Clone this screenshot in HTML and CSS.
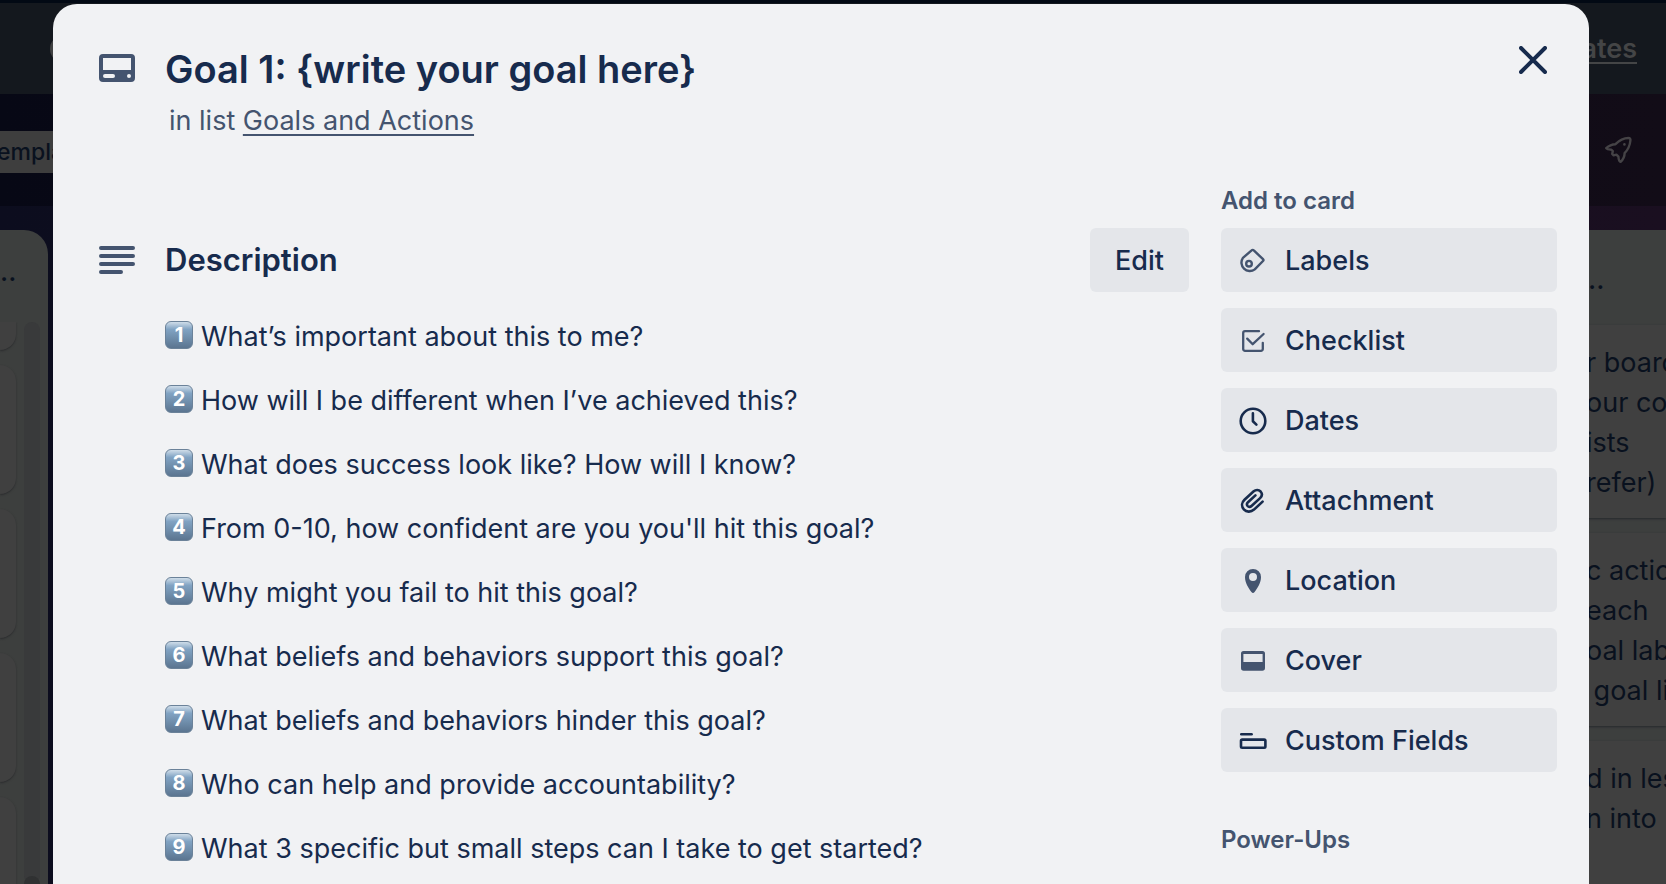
FILE: index.html
```
<!DOCTYPE html>
<html lang="en">
<head>
    <meta charset="UTF-8">
    <meta name="viewport" content="width=device-width, initial-scale=1.0">
    <title>Goal 1: {write your goal here}</title>
    <link rel="stylesheet" href="styles.css">
</head>
<body>
    <!-- Board behind the dialog -->
    <div class="board">
        <div class="top-nav">
            <span class="nav-dot"></span>
            <a class="nav-link" href="#">ates</a>
        </div>
        <div class="board-header">
            <span class="board-tag">empla</span>
            <svg class="rocket" viewBox="0 0 32 32" width="32" height="32" fill="none" stroke="currentColor" stroke-width="2.4" stroke-linejoin="round"><path d="M4.2 14.2C7 11.6 10 10.3 13.5 10.2C17.5 6 22 4 26.5 4C28 4 28.6 5 28.4 6.5C28 11 26.2 15.5 22.6 19.2C22.6 22.5 21.2 25.5 18.6 27.8C17.2 27.6 16.6 25.5 16.4 22.6L14.4 20.6L11.6 21.4L10.2 20L10.8 17.2L9.4 15.8C7 15.6 5 15.4 4.2 14.2Z"/><circle cx="22.4" cy="10.4" r="1.3" fill="currentColor" stroke="none"/></svg>
        </div>
        <div class="lists">
            <div class="list list-left">
                <div class="list-title">..</div>
                <div class="list-body">
                    <div class="cards">
                        <div class="card card-cut"></div>
                        <div class="card"></div>
                        <div class="card"></div>
                        <div class="card"></div>
                        <div class="card"></div>
                    </div>
                    <div class="scrollbar"><span class="scroll-thumb"></span></div>
                </div>
            </div>
            <div class="list list-right">
                <div class="list-title">..</div>
                <div class="text-card">r board<br>our com<br>ists<br>refer)</div>
                <div class="text-card">c actio<br>each<br>oal lab<br>&nbsp;goal li</div>
                <div class="text-card">d in les<br>n into<br><br><br></div>
            </div>
        </div>
    </div>

    <!-- Card dialog -->
    <div class="overlay">
        <div class="dialog" role="dialog" aria-labelledby="card-title">
            <div class="dialog-header">
                <svg class="section-icon" viewBox="0 0 36 28" width="36" height="28"><path fill="currentColor" fill-rule="evenodd" d="M4 0H32A4 4 0 0 1 36 4V24A4 4 0 0 1 32 28H4A4 4 0 0 1 0 24V4A4 4 0 0 1 4 0ZM4 4V16H32V4ZM6 20A2 2 0 0 0 6 24H14A2 2 0 0 0 14 20ZM30 20A2 2 0 0 0 30 24A2 2 0 0 0 30 20Z"/></svg>
                <div class="heading">
                    <h1 id="card-title">Goal 1: {write your goal here}</h1>
                    <p class="in-list">in list <a href="#">Goals and Actions</a></p>
                </div>
                <button class="close" type="button" aria-label="Close"><svg viewBox="0 0 28 28" width="28" height="28" fill="none" stroke="currentColor" stroke-width="4" stroke-linecap="round"><path d="M2 2L26 26M26 2L2 26"/></svg></button>
            </div>

            <div class="dialog-body">
                <div class="main">
                    <div class="section-title">
                        <svg class="section-icon" viewBox="0 0 36 28" width="36" height="28" stroke="currentColor" stroke-width="4" stroke-linecap="round"><path d="M2 2H34M2 10H34M2 18H34M2 26H22"/></svg>
                        <h2>Description</h2>
                        <button class="edit" type="button">Edit</button>
                    </div>
                    <div class="description">
                        <p><span class="keycap">1</span>What’s important about this to me?</p>
                        <p><span class="keycap">2</span>How will I be different when I’ve achieved this?</p>
                        <p><span class="keycap">3</span>What does success look like? How will I know?</p>
                        <p><span class="keycap">4</span>From 0-10, how confident are you you'll hit this goal?</p>
                        <p><span class="keycap">5</span>Why might you fail to hit this goal?</p>
                        <p><span class="keycap">6</span>What beliefs and behaviors support this goal?</p>
                        <p><span class="keycap">7</span>What beliefs and behaviors hinder this goal?</p>
                        <p><span class="keycap">8</span>Who can help and provide accountability?</p>
                        <p><span class="keycap">9</span>What 3 specific but small steps can I take to get started?</p>
                    </div>
                </div>

                <div class="sidebar">
                    <h3>Add to card</h3>
                    <div class="actions">
                        <button type="button"><svg class="soft" viewBox="0 0 32 32" fill="none" stroke="currentColor" stroke-width="2.4" stroke-linejoin="round"><path d="M14.6 5.4Q15.7 4.3 16.8 5.4L26 14.2Q26.9 15.1 26 16L17.8 24.4A8.4 8.4 0 0 1 5.9 12.9Z"/><circle cx="12" cy="18.7" r="2.8"/></svg>Labels</button>
                        <button type="button"><svg class="soft" viewBox="0 0 32 32" fill="none" stroke="currentColor" stroke-width="2.3" stroke-linecap="round" stroke-linejoin="round"><path d="M22 6.2H8A1.8 1.8 0 0 0 6.2 8V24A1.8 1.8 0 0 0 8 25.8H24A1.8 1.8 0 0 0 25.8 24V17.8M10.2 13.6L15.7 19.2L26.6 9"/></svg>Checklist</button>
                        <button type="button"><svg viewBox="0 0 32 32" fill="none" stroke="currentColor" stroke-width="2.6" stroke-linecap="round" stroke-linejoin="round"><circle cx="16" cy="16" r="12.3"/><path d="M15.9 8.3V16.2L19.4 19.6"/></svg>Dates</button>
                        <button type="button"><svg viewBox="0 0 32 32" fill="none" stroke="currentColor" stroke-width="2.6" stroke-linecap="round" stroke-linejoin="round"><path d="M25.6 16.6L17 24.6C13.8 27.4 9.4 27.2 6.8 24.3C4.3 21.4 4.6 17.4 7.5 14.7L16.7 6.3C18.8 4.5 21.8 4.6 23.6 6.5C25.3 8.5 25.1 11.2 23.1 13.1L14.5 21C13.3 22.1 11.6 22.1 10.6 21C9.6 19.8 9.8 18.4 11 17.2L18.4 10.4"/></svg>Attachment</button>
                        <button type="button"><svg class="soft" viewBox="0 0 32 32"><path fill="currentColor" fill-rule="evenodd" d="M16 4A8 8 0 0 1 24 12C24 18 20.5 23 17.6 27Q16 29 14.4 27C11.5 23 8 18 8 12A8 8 0 0 1 16 4ZM16 8A4 4 0 0 0 16 16A4 4 0 0 0 16 8Z"/></svg>Location</button>
                        <button type="button"><svg class="soft" viewBox="0 0 32 32"><path fill="currentColor" fill-rule="evenodd" d="M6.5 6H25.5A2.5 2.5 0 0 1 28 8.5V23A2.7 2.7 0 0 1 25.3 25.7H6.7A2.7 2.7 0 0 1 4 23V8.5A2.5 2.5 0 0 1 6.5 6ZM6.4 9V17H25.6V9Z"/></svg>Cover</button>
                        <button type="button"><svg viewBox="0 0 32 32" fill="none" stroke="currentColor" stroke-width="2.6" stroke-linecap="round"><path d="M4.3 9.3H14.6"/><rect x="4" y="14.6" width="24.4" height="8.2" rx="1.2"/></svg>Custom Fields</button>
                    </div>
                    <h3>Power-Ups</h3>
                </div>
            </div>
        </div>
    </div>
</body>
</html>
```

FILE: styles.css
```
* { box-sizing: border-box; }
body { margin: 0; height: 100vh; overflow: hidden; position: relative; font-family: Inter, "Liberation Sans", sans-serif; font-size: 27px; line-height: 40px; color: #172b4d; }
h1, h2, h3, p { margin: 0; }
button { font: inherit; font-weight: 500; color: #172b4d; border: none; cursor: pointer; }

/* Board, already dimmed */
.board { height: 100vh; display: flex; flex-direction: column; overflow: hidden; background: linear-gradient(90deg, #0c0d1e, #1a0f20); }
.top-nav { height: 94px; flex: none; border-top: 3px solid #020914; background: #14181e; padding: 0 29px 0 50px; display: flex; align-items: center; justify-content: space-between; }
.nav-dot { width: 28px; height: 28px; border-radius: 50%; background: #404142; }
.nav-link { font-size: 27px; font-weight: 600; color: #444546; text-decoration-thickness: 2px; text-underline-offset: 4px; }
.board-header { height: 112px; flex: none; padding-right: 32px; background: linear-gradient(90deg, #070815, #120c17); display: flex; align-items: center; justify-content: space-between; }
.board-tag { height: 42px; width: 64px; margin-top: 4px; background: #3e3e3e; color: #09111e; font-size: 23px; font-weight: 500; line-height: 42px; display: flex; justify-content: flex-end; }
.rocket { color: #454346; }
.lists { flex: 1; min-height: 0; padding-top: 24px; display: flex; justify-content: space-between; }
.list { background: #3d3f3e; color: #09111e; }
.list-left { width: 48px; border-radius: 0 24px 0 0; display: flex; flex-direction: column; }
.list-right { width: 80px; white-space: nowrap; }
.list-title { height: 92px; line-height: 84px; font-weight: 500; }
.list-body { flex: 1; min-height: 0; display: flex; gap: 8px; overflow: hidden; }
.cards { width: 16px; display: flex; flex-direction: column; gap: 15px; }
.card { height: 129px; flex: none; background: #404040; border-radius: 0 16px 16px 0; box-shadow: 0 1px 2px #2b2c2e; }
.card-cut { height: 28px; border-radius: 0 0 16px 0; }
.scrollbar { width: 16px; border-radius: 8px; background: #393a3b; display: flex; align-items: flex-end; }
.scroll-thumb { width: 16px; height: 8px; border-radius: 8px 8px 0 0; background: #303132; }
.list-right .list-title { height: 95px; line-height: 100px; padding-left: 2px; }
.text-card { background: #404040; padding: 18px 0 15px; margin-bottom: 15px; box-shadow: 0 1px 2px #26282c; }

/* Dialog */
.overlay { position: absolute; inset: 0; padding: 4px 77px 0 53px; overflow: hidden; }
.dialog { min-height: 100%; background: #f1f2f4; border-radius: 24px 24px 0 0; padding: 0 32px 0 46px; }
.dialog-header { display: flex; align-items: flex-start; padding-top: 24px; }
.section-icon { flex: none; color: #44546f; }
.dialog-header .section-icon { margin-top: 26px; }
.heading { flex: 1; padding: 17px 0 0 30px; }
h1 { font-size: 38px; line-height: 48px; font-weight: 600; }
.in-list { color: #44546f; padding: 8px 0 0 4px; }
.in-list a { color: #44546f; text-decoration-thickness: 2px; text-underline-offset: 4px; }
.close { width: 48px; height: 64px; padding: 0; background: none; display: flex; align-items: center; justify-content: center; }
.dialog-body { display: grid; grid-template-columns: minmax(0, 1fr) 336px; gap: 32px; padding-top: 40px; }
.main { padding-top: 47px; }
.section-title { display: flex; align-items: center; }
h2 { flex: 1; margin-left: 30px; font-size: 31px; line-height: 40px; font-weight: 600; }
.edit { height: 64px; padding: 2px 25px 0; background: #e4e6ea; border-radius: 6px; }
.description { padding: 25px 0 0 66px; display: flex; flex-direction: column; gap: 24px; }
.description p { display: flex; align-items: flex-start; gap: 8px; }
.keycap { width: 28px; height: 28px; margin-top: 4px; border: 1px solid #6b8299; border-radius: 6px; background: linear-gradient(#cfdde9, #81a3c3 28%, #5b7590); color: #fff; font-size: 20px; font-weight: 700; line-height: 26px; text-align: center; }
h3 { color: #44546f; font-size: 24px; line-height: 40px; font-weight: 600; }
.actions { display: flex; flex-direction: column; gap: 16px; padding: 7px 0 48px; }
.actions button { height: 64px; padding: 1px 16px 0; display: flex; align-items: center; gap: 16px; background: #e4e6ea; border-radius: 6px; text-align: left; }
.actions svg { width: 32px; height: 32px; flex: none; }
.soft { color: #44546f; }
```
